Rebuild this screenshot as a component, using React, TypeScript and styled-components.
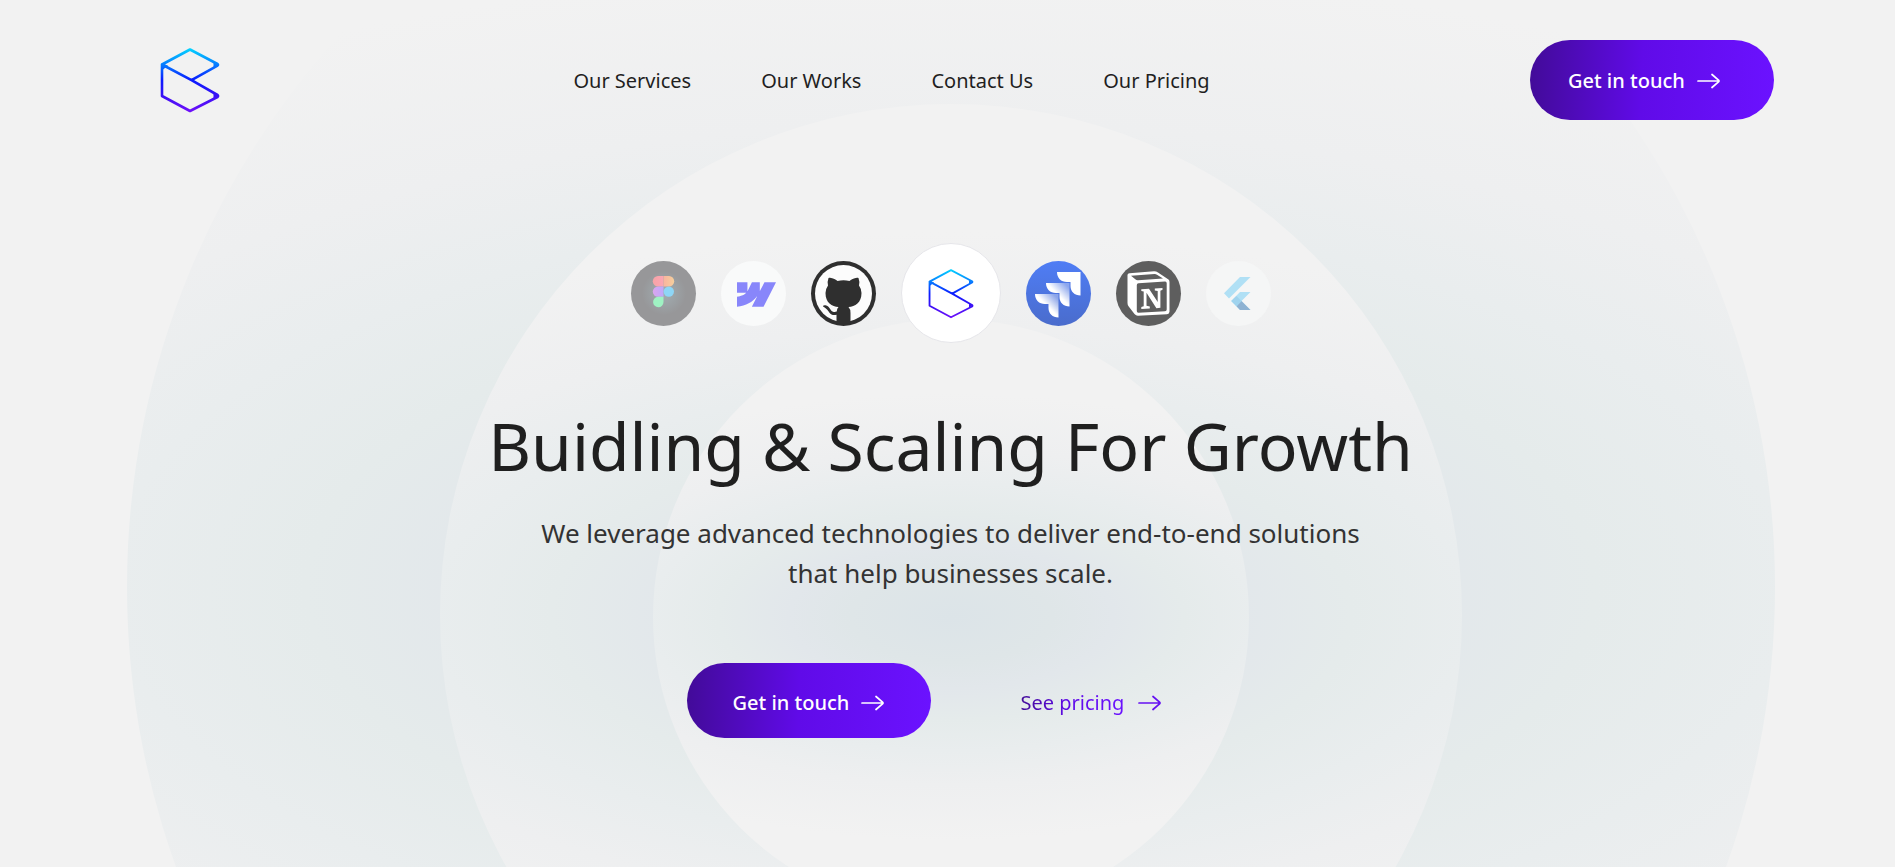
import React from "react";
import styled, { createGlobalStyle, css } from "styled-components";
import { SiWebflow } from "react-icons/si";

const GlobalStyle = createGlobalStyle`
  *, *::before, *::after { box-sizing: border-box; }
  html, body { margin: 0; background: #f2f2f2; overflow-x: hidden; }
  body { font-family: "Noto Sans", "Open Sans", sans-serif; color: #1f1f1f; }
`;

const brandGradient = "linear-gradient(92deg, #420b98 0%, #600be8 46%, #6b12ff 100%)";

const Page = styled.div`
  position: relative;
  min-height: 100vh;
  overflow: hidden;
  padding: 40px 121px 128px 127px;
`;

const Backdrop = styled.svg`
  position: absolute;
  top: -237px;
  left: calc(50% + 3px);
  width: 1648px;
  height: 1648px;
  transform: translateX(-50%);
  pointer-events: none;
`;

const Header = styled.header`
  position: relative;
  display: flex;
  align-items: center;
  justify-content: space-between;
`;

const LogoLink = styled.a`
  display: flex;
  justify-content: center;
  width: 126px;
`;

const Nav = styled.nav`
  display: flex;
  gap: 70px;
  padding-top: 2px;
`;

const NavLink = styled.a`
  color: #1f1f1f;
  font-size: 20px;
  line-height: 28px;
  text-decoration: none;
  white-space: nowrap;
`;

const PrimaryButton = styled.button<{ $size: "header" | "hero" }>`
  display: flex;
  align-items: center;
  gap: 12px;
  width: 244px;
  border: 0;
  border-radius: 40px;
  background: ${brandGradient};
  color: #fff;
  font-family: inherit;
  font-size: 20px;
  font-weight: 500;
  line-height: 28px;
  white-space: nowrap;
  cursor: pointer;
  ${({ $size }) =>
    $size === "header"
      ? css`height: 80px; padding: 2px 38px 0;`
      : css`height: 75px; padding: 4px 46px 0;`}
`;

const Hero = styled.main`
  position: relative;
  display: flex;
  flex-direction: column;
  align-items: center;
  padding-top: 123px;
  text-align: center;
`;

const TechList = styled.ul`
  display: flex;
  align-items: center;
  gap: 25px;
  margin: 0;
  padding: 0;
  list-style: none;
`;

const TechBadge = styled.li<{ $fill: string; $featured?: boolean }>`
  display: flex;
  align-items: center;
  justify-content: center;
  width: ${({ $featured }) => ($featured ? 100 : 65)}px;
  height: ${({ $featured }) => ($featured ? 100 : 65)}px;
  border: ${({ $featured }) => ($featured ? "1px solid #e6e6ea" : "0")};
  border-radius: 50%;
  background: ${({ $fill }) => $fill};
`;

const WebflowMark = styled(SiWebflow)`
  width: 39px;
  height: 39px;
  margin: 2px 0 0 6px;
  color: #8886fa;
`;

const Title = styled.h1`
  margin: 54px 0 0;
  font-size: 66px;
  font-weight: 400;
  line-height: 96px;
`;

const Subtitle = styled.p`
  max-width: 850px;
  margin: 20px 0 0;
  color: #333;
  font-size: 26px;
  line-height: 40px;
`;

const Actions = styled.div`
  display: flex;
  align-items: center;
  gap: 90px;
  margin-top: 70px;
`;

const PricingLink = styled.a`
  display: flex;
  align-items: center;
  gap: 14px;
  width: 194px;
  padding-top: 4px;
  color: #6510f2;
  font-size: 20px;
  line-height: 28px;
  text-decoration: none;
  white-space: nowrap;
`;

const GradientText = styled.span`
  background: ${brandGradient};
  background-clip: text;
  -webkit-background-clip: text;
  color: transparent;
`;

function Logo({ width, height, id, stroke }: { width: number; height: number; id: string; stroke: number }) {
  return (
    <svg width={width} height={height} viewBox="0 0 60 66" fill="none" role="img" aria-label="Company logo">
      <defs>
        <linearGradient id={id} x1="30" y1="1" x2="30" y2="65" gradientUnits="userSpaceOnUse">
          <stop offset="0" stopColor="#04d6ff" />
          <stop offset="0.25" stopColor="#0680ff" />
          <stop offset="0.5" stopColor="#0a1cff" />
          <stop offset="0.75" stopColor="#3a10f5" />
          <stop offset="1" stopColor="#7010fa" />
        </linearGradient>
      </defs>
      <path
        d="M2 17.500 30 2.500 57.500 17 Q58.500 17.800 57.500 18.600 L31.500 33.200 57.500 48 Q58.500 49 57.500 50 L30 64 2 49 V17.500 L31.500 33.200"
        stroke={`url(#${id})`}
        strokeWidth={stroke}
        strokeLinejoin="round"
        strokeLinecap="round"
      />
      <path d="M1.500 16.500 8 18.500 2.500 23ZM53.500 15.500 58 17.800 53.500 20.500ZM53.500 46.500 58 49 53.500 51.500ZM28.500 32 33.500 31.500 34.500 34.500Z" fill={`url(#${id})`} />
    </svg>
  );
}

function Arrow() {
  return (
    <svg width="23" height="16" viewBox="0 0 23 16" fill="none" stroke="currentColor" strokeWidth="1.7" strokeLinecap="round" strokeLinejoin="round" aria-hidden="true">
      <path d="M1 8H21.500M15 1.500 21.800 7.400Q22.200 8 21.800 8.600L15 14.500" />
    </svg>
  );
}

function FigmaMark() {
  return (
    <svg width="65" height="65" viewBox="0 0 65 65" role="img" aria-label="Figma">
      <defs>
        <radialGradient id="figmaGlow">
          <stop offset="0" stopColor="#a8bdc4" stopOpacity="0.6" />
          <stop offset="0.5" stopColor="#a8bdc4" stopOpacity="0.3" />
          <stop offset="1" stopColor="#a8bdc4" stopOpacity="0" />
        </radialGradient>
        <linearGradient id="figmaRed"><stop stopColor="#f7a3a6" /><stop offset="1" stopColor="#fba6b4" /></linearGradient>
        <linearGradient id="figmaOrange"><stop stopColor="#f9b49f" /><stop offset="1" stopColor="#f5cf9c" /></linearGradient>
        <linearGradient id="figmaPurple"><stop stopColor="#dba5ee" /><stop offset="1" stopColor="#bda9fb" /></linearGradient>
      </defs>
      <circle cx="33" cy="32" r="22" fill="url(#figmaGlow)" />
      <path d="M32.500 15H27a5.200 5.200 0 0 0 0 10.400h5.500z" fill="url(#figmaRed)" />
      <path d="M32.500 15H38a5.200 5.200 0 0 1 0 10.400h-5.500z" fill="url(#figmaOrange)" />
      <path d="M32.500 25.400H27a5.200 5.200 0 0 0 0 10.400h5.500z" fill="url(#figmaPurple)" />
      <circle cx="37.800" cy="30.600" r="5.200" fill="#8ed6f6" />
      <path d="M32.500 35.800H27a5.200 5.200 0 1 0 5.500 5.200z" fill="#9ff2c3" />
    </svg>
  );
}

function GitHubMark() {
  return (
    <svg width="65" height="65" viewBox="0 0 65 65" role="img" aria-label="GitHub">
      <circle cx="32.500" cy="32.500" r="28.500" fill="#fcfcfc" />
      <path
        d="M17.500 17C21 16 25 19 26.500 20Q32.500 18.500 38.500 20C40 19 44 16 47.500 17Q49 21 48 24.500 50.500 28 50.500 32C50.500 42 44 45.500 37.500 46Q39.500 48 39.500 52V62.500H25.500V53.800C19 55 19 51.500 16 48.500Q14 46.500 12 45.500 12 44 14.500 44.300C19 45 19 50 22 50.800Q24 51.300 25.700 50.500 26 47 27.500 46C21 45.500 14.500 42 14.500 32Q14.500 28 17 24.500 16 21 17.500 17Z"
        fill="#2f2f2f"
      />
    </svg>
  );
}

function JiraMark() {
  return (
    <svg width="65" height="65" viewBox="0 0 65 65" role="img" aria-label="Jira">
      <defs>
        <linearGradient id="jiraFade" x1="23" y1="0" x2="8" y2="15" gradientUnits="userSpaceOnUse">
          <stop offset="0.15" stopColor="#fff" stopOpacity="0.35" />
          <stop offset="0.75" stopColor="#fff" />
        </linearGradient>
        <path id="jiraShape" d="M0 0H23.500V23.500C17.500 23.500 13.500 19.500 13.500 14V10H10C4 10 0 6 0 0Z" />
      </defs>
      <use href="#jiraShape" x="31" y="11" fill="#fff" />
      <g transform="translate(20 22)"><use href="#jiraShape" fill="url(#jiraFade)" /></g>
      <g transform="translate(9 33)"><use href="#jiraShape" fill="url(#jiraFade)" /></g>
    </svg>
  );
}

function NotionMark() {
  return (
    <svg width="65" height="65" viewBox="0 0 65 65" role="img" aria-label="Notion">
      <path d="M11.500 14Q11.500 12.500 13.500 12.300L38 10.300Q40 10.200 42 11.500L52.500 18.500Q53.500 19.300 53.500 21V50.500Q53.500 53 51 53.200L22 54.800Q20 54.900 18.500 53L12.700 45.500Q11.500 44 11.500 42Z" fill="#fff" />
      <path d="M15 14.800 38.500 12.900Q39.700 12.800 41 13.700L47 17.600 22 19.200Q20.500 19.300 19.300 18.300Z" fill="#5e5e5e" />
      <path d="M20.800 24Q20.800 22.300 22.500 22.200L49 20.600Q50.700 20.500 50.700 22.200V48.500Q50.700 50 49 50.200L22.500 51.700Q20.800 51.800 20.800 50Z" fill="#5e5e5e" />
      <path d="M25.300 28.200 33 27.700 41.700 41V29.900L38.800 29.500V27.400L46.500 26.900V28.800L44.400 29.700V46.800L40.400 47.200 30.500 31.800V44.800L33.800 45.500V47.500L25.300 48V46L27.700 45.200V30.400L25.300 29.900Z" fill="#fff" />
    </svg>
  );
}

function FlutterMark() {
  return (
    <svg width="65" height="65" viewBox="0 0 65 65" role="img" aria-label="Flutter">
      <path d="M34 16H44.500L23 37.500 18 32.300ZM34 31H44.500L35.500 40 44.500 49H34L25.200 40Z" fill="#b0e0f5" />
      <path d="M30.500 45.300 35.500 40 44.500 49H34Z" fill="#8eb2d2" />
      <path d="M25.200 40 30.400 34.900 35.500 40 30.400 45.200Z" fill="#9fd3ee" />
    </svg>
  );
}

const rings = [
  { id: "outerRing", cy: 824, r: 824 },
  { id: "middleRing", cy: 852, r: 511 },
  { id: "innerRing", cy: 854, r: 298 },
];

function Rings() {
  return (
    <Backdrop viewBox="0 0 1648 1648" aria-hidden="true">
      <defs>
        {rings.map(({ id, cy, r }) => (
          <radialGradient
            key={id}
            id={id}
            cx="0"
            cy="0"
            r="1"
            gradientUnits="userSpaceOnUse"
            gradientTransform={`translate(824 ${cy}) scale(${r * 1.7} ${r * 0.75})`}
          >
            <stop offset="0" stopColor="#dce4e8" />
            <stop offset="0.2" stopColor="#dfe6e8" />
            <stop offset="0.32" stopColor="#e2e7eb" />
            <stop offset="0.46" stopColor="#e5ebeb" />
            <stop offset="0.6" stopColor="#e9edee" />
            <stop offset="0.75" stopColor="#eeeff0" />
            <stop offset="1" stopColor="#f2f2f2" />
          </radialGradient>
        ))}
      </defs>
      {rings.map(({ id, cy, r }) => (
        <circle key={id} cx="824" cy={cy} r={r} fill={`url(#${id})`} />
      ))}
    </Backdrop>
  );
}

const navItems = ["Our Services", "Our Works", "Contact Us", "Our Pricing"];

export default function App() {
  return (
    <>
      <GlobalStyle />
      <Page>
        <Rings />
        <Header>
          <LogoLink href="#">
            <Logo width={60} height={66} id="headerLogo" stroke={2.6} />
          </LogoLink>
          <Nav aria-label="Main">
            {navItems.map((item) => (
              <NavLink key={item} href="#">{item}</NavLink>
            ))}
          </Nav>
          <PrimaryButton type="button" $size="header">
            Get in touch
            <Arrow />
          </PrimaryButton>
        </Header>

        <Hero>
          <TechList>
            <TechBadge $fill="#979799"><FigmaMark /></TechBadge>
            <TechBadge $fill="#f9fafa"><WebflowMark title="Webflow" /></TechBadge>
            <TechBadge $fill="#2f2f2f"><GitHubMark /></TechBadge>
            <TechBadge $fill="#fff" $featured><Logo width={46} height={51} id="badgeLogo" stroke={2.4} /></TechBadge>
            <TechBadge $fill="linear-gradient(#4f7df5, #4a6ccc)"><JiraMark /></TechBadge>
            <TechBadge $fill="#5e5e5e"><NotionMark /></TechBadge>
            <TechBadge $fill="#f5f6f6"><FlutterMark /></TechBadge>
          </TechList>
          <Title>Buidling &amp; Scaling For Growth</Title>
          <Subtitle>
            We leverage advanced technologies to deliver end-to-end solutions that help businesses scale.
          </Subtitle>
          <Actions>
            <PrimaryButton type="button" $size="hero">
              Get in touch
              <Arrow />
            </PrimaryButton>
            <PricingLink href="#">
              <GradientText>See pricing</GradientText>
              <Arrow />
            </PricingLink>
          </Actions>
        </Hero>
      </Page>
    </>
  );
}
